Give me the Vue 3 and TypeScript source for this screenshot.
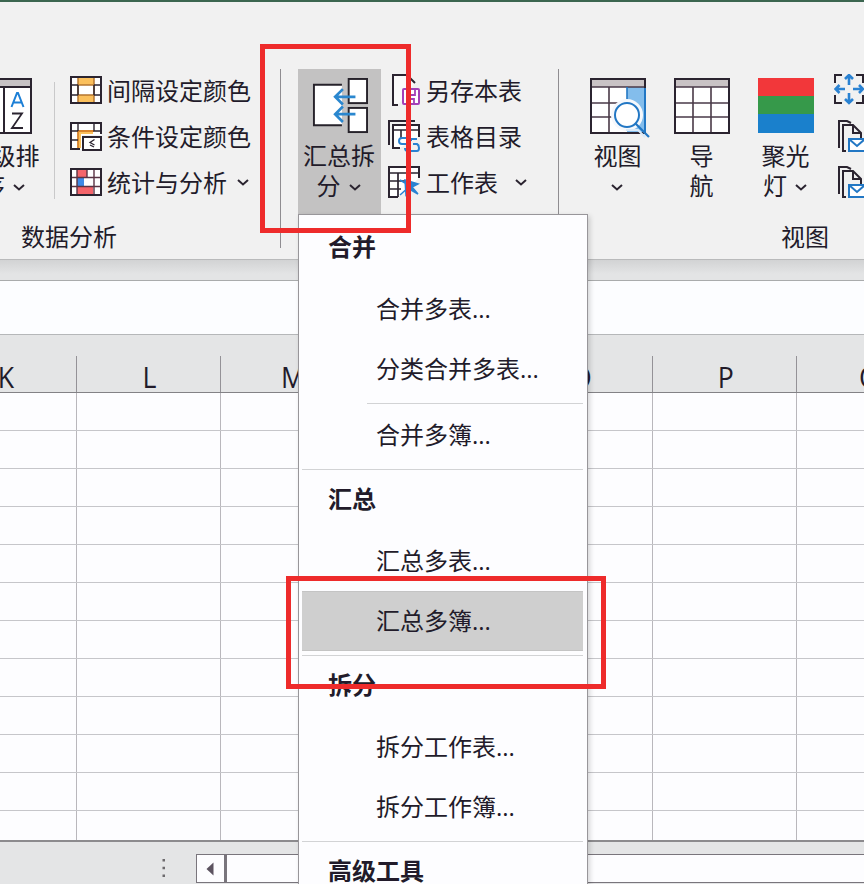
<script setup lang="ts">
interface MenuSection {
  title: string
  items: { label: string; active?: boolean; ruled?: boolean }[]
}

const sections: MenuSection[] = [
  {
    title: '合并',
    items: [
      { label: '合并多表...' },
      { label: '分类合并多表...' },
      { label: '合并多簿...', ruled: true },
    ],
  },
  {
    title: '汇总',
    items: [{ label: '汇总多表...' }, { label: '汇总多簿...', active: true }],
  },
  {
    title: '拆分',
    items: [{ label: '拆分工作表...' }, { label: '拆分工作簿...' }],
  },
  { title: '高级工具', items: [] },
]

const columns: string[] = ['K', 'L', 'M', 'N', 'O', 'P', 'Q']
const rowCount = 12
</script>

<template>
  <div class="window">
    <header class="ribbon">
      <section class="group group-data">
        <div class="tools">
          <div class="big sort">
            <svg class="big-icon" width="56" height="56" viewBox="0 0 56 56">
              <rect x="1" y="1" width="54" height="54" fill="#fff" stroke="#2b2430" stroke-width="2" />
              <rect x="2" y="2" width="52" height="6" fill="#c6c2c4" />
              <path d="M1 9H55M28 9V55" stroke="#2b2430" stroke-width="2" />
              <path d="M35.500 29L41 15h1L47.500 29M37.500 24.500H45.500" fill="none" stroke="#1c7fd6" stroke-width="2" />
              <path d="M36 35.500H46L36 50H47" fill="none" stroke="#2b2430" stroke-width="1.800" />
            </svg>
            <div class="cap">超级排</div>
            <div class="cap">序<svg class="chev" width="12" height="7" viewBox="0 0 12 7"><path d="M1 1L6 5.500L11 1" /></svg></div>
          </div>
          <div class="small-list data-list">
            <div class="small">
              <svg width="32" height="28" viewBox="0 0 32 28">
                <rect x="1" y="1" width="30" height="26" fill="#fff" />
                <path d="M8 1H24V9H8ZM8 19H24V27H8Z" fill="#fbc05c" />
                <path d="M8 9H24M8 19H24M8 1V27M24 1V27" stroke="#b5762f" stroke-width="1.500" />
                <path d="M1 9H8M24 9H31M1 19H8M24 19H31M8 9V19M24 9V19" stroke="#2b2430" stroke-width="1.500" />
                <rect x="1" y="1" width="30" height="26" fill="none" stroke="#2b2430" stroke-width="2" />
              </svg>
              <span>间隔设定颜色</span>
            </div>
            <div class="small">
              <svg width="32" height="30" viewBox="0 0 32 30">
                <path d="M1 2H31V14H12V28H1Z" fill="#fff" />
                <path d="M8 10H23V13H11V27H8Z" fill="#fbc05c" />
                <path d="M8 28V10H24" fill="none" stroke="#d8832b" stroke-width="1.800" />
                <path d="M1 10H8M1 19H8M8 2V10M24 2V10H31" fill="none" stroke="#2b2430" stroke-width="1.400" />
                <path d="M10 28H1V2H31V13" fill="none" stroke="#2b2430" stroke-width="2" />
                <rect x="13" y="16" width="18" height="13" fill="#fff" stroke="#2b2430" stroke-width="2" />
                <path d="M24.500 18.500L20 21.500L24.500 24M20 24L24 26" fill="none" stroke="#2b2430" stroke-width="1.300" />
              </svg>
              <span>条件设定颜色</span>
            </div>
            <div class="small">
              <svg width="32" height="28" viewBox="0 0 32 28">
                <rect x="1" y="1" width="30" height="26" fill="#fff" />
                <path d="M7 1H17V9H7ZM7 19H23V27H7Z" fill="#f4656b" />
                <rect x="7" y="10" width="7" height="8" fill="#3d8ae8" />
                <path d="M1 9.500H31M1 18.500H31M7 1V27M17 1V9M24 1V27" stroke="#5a3444" stroke-width="1.400" />
                <rect x="1" y="1" width="30" height="26" fill="none" stroke="#2b2430" stroke-width="2" />
              </svg>
              <span>统计与分析</span>
              <svg class="chev wide" width="12" height="7" viewBox="0 0 12 7"><path d="M1 1L6 5.500L11 1" /></svg>
            </div>
          </div>
        </div>
        <div class="label">数据分析</div>
      </section>

      <section class="group group-merge">
        <div class="tools">
          <div class="big pressed">
            <svg class="big-icon" width="58" height="58" viewBox="0 0 58 58">
              <path d="M31 7H2V49H31" fill="#fff" stroke="#26222a" stroke-width="2" />
              <rect x="38" y="1" width="19" height="25" fill="#fff" stroke="#26222a" stroke-width="2" />
              <rect x="38" y="31" width="19" height="25" fill="#fff" stroke="#26222a" stroke-width="2" />
              <path d="M45 19.500H24M32 11.500L24 19.500L32 27.500M45 37.500H24M32 29.500L24 37.500L32 45.500" fill="none" stroke="#2a87cf" stroke-width="2.800" />
            </svg>
            <div class="cap">汇总拆</div>
            <div class="cap">分<svg class="chev" width="12" height="7" viewBox="0 0 12 7"><path d="M1 1L6 5.500L11 1" /></svg></div>
          </div>
          <div class="small-list merge-list">
            <div class="small">
              <svg width="32" height="32" viewBox="0 0 32 32">
                <path d="M10 31H5V1H19L27 9" fill="#fafafa" stroke="#2b2430" stroke-width="2" />
                <rect x="15" y="15" width="16" height="15" rx="1" fill="#fff" stroke="#a341b8" stroke-width="2" />
                <path d="M19 15V21H27V15M20 30V25H26V30" fill="none" stroke="#a341b8" stroke-width="1.800" />
              </svg>
              <span>另存本表</span>
            </div>
            <div class="small">
              <svg width="32" height="32" viewBox="0 0 32 32">
                <path d="M1 25V1H27" fill="none" stroke="#2b2430" stroke-width="2" />
                <path d="M12 28H5V5H31V17" fill="#fff" stroke="#2b2430" stroke-width="2" />
                <path d="M5 10H31M13 10V18M22 10V16" stroke="#2b2430" stroke-width="1.600" />
                <path d="M19 18H14Q11 18 11 21T14 24H18M23 19H29M17 28Q17 31 20 31H29Q31 31 31 28T29 24H25M20 24Q20 20 24 20" fill="none" stroke="#2a82d2" stroke-width="2" />
              </svg>
              <span>表格目录</span>
            </div>
            <div class="small">
              <svg width="32" height="32" viewBox="0 0 32 32">
                <path d="M10 31H1V1H31V12" fill="#fff" stroke="#2b2430" stroke-width="2" />
                <path d="M1 7H31M1 15H20M1 23H13M10 7V31M20 7V15" fill="none" stroke="#2b2430" stroke-width="1.700" />
                <path d="M12 29L22 20M12 14L22 20M17 14L30 18L24 21L30 28L23 24L18 29Z" fill="#2a82d2" stroke="#2a82d2" stroke-width="1.500" />
              </svg>
              <span>工作表</span>
              <svg class="chev far" width="12" height="7" viewBox="0 0 12 7"><path d="M1 1L6 5.500L11 1" /></svg>
            </div>
          </div>
        </div>
      </section>

      <section class="group group-view">
        <div class="tools">
          <div class="big">
            <svg class="big-icon shifted" width="60" height="60" viewBox="0 0 60 60">
              <rect x="1" y="1" width="54" height="54" fill="#fff" />
              <rect x="1" y="1" width="54" height="8" fill="#c9c3c5" />
              <rect x="37" y="9" width="18" height="46" fill="#83bdec" />
              <path d="M1 9H55M1 25H37M1 39H30M19 9V55" stroke="#4a3a48" stroke-width="1.600" />
              <path d="M37 9V25" stroke="#2277c4" stroke-width="1.600" />
              <rect x="1" y="1" width="54" height="54" fill="none" stroke="#2b2430" stroke-width="2" />
              <path d="M55 10V54" stroke="#2277c4" stroke-width="2" />
              <circle cx="37" cy="37" r="16" fill="#f5f8fc" />
              <path d="M36 52H48L55 59" fill="none" stroke="#d9eafa" stroke-width="2" />
              <circle cx="37" cy="37" r="12" fill="#fff" stroke="#2277c4" stroke-width="2" />
              <path d="M45.500 45.500L59 59" stroke="#2277c4" stroke-width="2.200" />
            </svg>
            <div class="cap">视图</div>
            <div class="cap"><svg class="chev alone" width="12" height="7" viewBox="0 0 12 7"><path d="M1 1L6 5.500L11 1" /></svg></div>
          </div>
          <div class="big">
            <svg class="big-icon" width="56" height="56" viewBox="0 0 56 56">
              <rect x="1" y="1" width="54" height="54" fill="#fff" />
              <rect x="1" y="1" width="54" height="8" fill="#c9c3c5" />
              <path d="M1 9H55M1 25H55M1 39H55M19 9V55M37 9V55" stroke="#4a3a48" stroke-width="1.600" />
              <rect x="1" y="1" width="54" height="54" fill="none" stroke="#2b2430" stroke-width="2" />
            </svg>
            <div class="cap">导</div>
            <div class="cap">航</div>
          </div>
          <div class="big">
            <svg class="big-icon" width="56" height="56" viewBox="0 0 56 56">
              <rect width="56" height="18" fill="#f2373a" />
              <rect y="18" width="56" height="18" fill="#36994a" />
              <rect y="36" width="56" height="19" fill="#1a80cc" />
            </svg>
            <div class="cap">聚光</div>
            <div class="cap">灯<svg class="chev" width="12" height="7" viewBox="0 0 12 7"><path d="M1 1L6 5.500L11 1" /></svg></div>
          </div>
          <div class="small-list view-list">
            <div class="small">
              <svg width="32" height="32" viewBox="0 0 32 32">
                <path d="M1 9V1H8M22 1H29V9M1 21V29H8M22 29H29V21" fill="none" stroke="#2b2430" stroke-width="2" />
                <path d="M15 11V1M11 5L15 1L19 5M15 19V29M11 25L15 29L19 25M11 15H1.500M5.500 11L1.500 15L5.500 19M19 15H29M25 11L29 15L25 19" fill="none" stroke="#2a82d2" stroke-width="2.600" />
              </svg>
            </div>
            <div v-for="n in 2" :key="n" class="small">
              <svg width="36" height="32" viewBox="0 0 36 32">
                <path d="M5 28V1H13L17 3M12 31H9V5H19L27 13V18" fill="none" stroke="#2b2430" stroke-width="2" />
                <path d="M19 5V13H27" fill="none" stroke="#2b2430" stroke-width="2" />
                <rect x="15" y="19" width="20" height="12" fill="#fff" stroke="#2277c4" stroke-width="2" />
                <path d="M15 19L23 26L31 19" fill="none" stroke="#2277c4" stroke-width="2" />
              </svg>
            </div>
          </div>
        </div>
        <div class="label">视图</div>
      </section>
    </header>

    <div class="strip"></div>
    <div class="formula"></div>

    <main class="sheet">
      <div class="col-heads">
        <div v-for="c in columns" :key="c" class="col-head"><span>{{ c }}</span></div>
      </div>
      <div class="grid">
        <div v-for="r in rowCount" :key="r" class="row">
          <div v-for="c in columns" :key="c" class="cell"></div>
        </div>
      </div>
    </main>

    <footer class="bottom">
      <svg class="dots" width="4" height="20" viewBox="0 0 4 20">
        <path d="M.5 1h2.500v2.500H.5zM.5 8.700h2.500v2.500H.5zM.5 16.500h2.500v2.500H.5z" fill="#6c6a6d" />
      </svg>
      <div class="arrow">
        <svg width="8" height="14" viewBox="0 0 8 14"><path d="M7.500 .5V13.500L.5 7Z" fill="#5c5360" /></svg>
      </div>
      <div class="track"></div>
    </footer>

    <nav class="menu">
      <template v-for="(s, i) in sections" :key="s.title">
        <div v-if="i > 0" class="rule"></div>
        <div class="menu-title">{{ s.title }}</div>
        <template v-for="it in s.items" :key="it.label">
          <div v-if="it.ruled" class="rule inset"></div>
          <div class="menu-item" :class="{ active: it.active }">{{ it.label }}</div>
        </template>
      </template>
    </nav>

    <div class="mark mark-button"></div>
    <div class="mark mark-item"></div>
  </div>
</template>

<style>
body {
  margin: 0;
  overflow: hidden;
}
</style>

<style scoped>
.window {
  position: relative;
  width: 864px;
  height: 884px;
  overflow: hidden;
  display: flex;
  flex-direction: column;
  background: #e4e5e6;
  color: #221b2a;
  font-family: 'Open Sans', 'Noto Sans CJK SC', sans-serif;
  font-size: 24px;
}
.window * {
  box-sizing: border-box;
}
svg {
  display: block;
  flex: none;
}
.ribbon {
  flex: none;
  height: 260px;
  display: flex;
  padding-top: 67px;
  border-top: 2px solid #3c6650;
  border-bottom: 1px solid #b9babb;
  background: #f1f1f1;
}
.group {
  flex: none;
  height: 179px;
  display: flex;
  flex-direction: column;
}
.group-data {
  width: 281px;
  border-right: 1px solid #8f8d91;
}
.group-merge {
  width: 278px;
  padding-left: 17px;
  border-right: 1px solid #8f8d91;
}
.group-view {
  padding-left: 17px;
}
.tools {
  display: flex;
  height: 145px;
}
.big {
  flex: none;
  width: 84px;
  height: 145px;
  padding-top: 9px;
  display: flex;
  flex-direction: column;
  align-items: center;
}
.big-icon {
  height: 56px;
  overflow: visible;
  margin-bottom: 7px;
}
.shifted {
  height: 60px;
  margin: 0 -4px 3px 0;
}
.sort {
  width: 88px;
  margin-left: -40px;
}
.pressed {
  width: 83px;
  background: #c3c2c2;
}
.cap {
  display: flex;
  align-items: center;
  height: 30px;
  margin-right: 1px;
  line-height: 30px;
  white-space: nowrap;
}
.chev {
  margin: 2px 1px 0 8px;
}
.chev path {
  fill: none;
  stroke: #2b2430;
  stroke-width: 2;
}
.chev.alone {
  margin: 2px 1px 0 0;
}
.small-list {
  display: flex;
  flex-direction: column;
  padding-left: 7px;
}
.merge-list,
.view-list {
  margin-top: -2px;
}
.data-list {
  margin: 13px 0 15px 6px;
  padding-left: 15px;
  border-left: 1px solid #c9c9ca;
}
.data-list .small:first-child {
  margin-top: -15px;
}
.view-list {
  padding-left: 6px;
}
.small {
  flex: none;
  display: flex;
  align-items: center;
  height: 46px;
  gap: 6px;
  white-space: nowrap;
}
.data-list .small {
  gap: 5px;
}
.small span {
  padding-top: 2px;
  line-height: 30px;
}
.small .chev {
  margin: 1px 0 0 11px;
}
.small .wide {
  margin-left: 5px;
}
.label {
  height: 34px;
  margin-top: 6px;
  line-height: 34px;
}
.group-data .label {
  padding-left: 21px;
}
.group-view .label {
  padding-left: 205px;
}
.strip {
  flex: none;
  height: 21px;
  background: linear-gradient(#d2d3d4, #e3e4e5 70%);
  border-bottom: 1px solid #a9abac;
}
.formula {
  flex: none;
  height: 54px;
  background: #fcfdff;
  border-bottom: 1px solid #b5b7b9;
}
.sheet {
  flex: none;
  height: 507px;
  display: flex;
  flex-direction: column;
  overflow: hidden;
  background: #fdfdff;
  border-bottom: 2px solid #8c8b8e;
}
.col-heads {
  flex: none;
  display: flex;
  height: 58px;
  margin-left: -67px;
  padding-top: 21px;
  background: #e4e5e6;
  border-bottom: 1px solid #838286;
}
.col-head,
.cell {
  flex: none;
  width: 144px;
  border-right: 1px solid #b9b7bc;
}
.col-head {
  display: flex;
  justify-content: center;
  padding-left: 2px;
  font-size: 29px;
  line-height: 41px;
  border-right-color: #949297;
}
.col-head span {
  transform: scaleX(0.92);
}
.grid {
  margin-left: -67px;
}
.row {
  display: flex;
  height: 38px;
  border-bottom: 1px solid #c6c6ca;
}
.bottom {
  flex: 1;
  display: flex;
  align-items: flex-start;
  padding-top: 12px;
  background: #e4e5e6;
}
.dots {
  margin: 4px 30px 0 162px;
}
.arrow {
  width: 29px;
  height: 29px;
  padding-right: 2px;
  display: flex;
  align-items: center;
  justify-content: center;
  background: #fdfdff;
  border: 1px solid #79757c;
}
.track {
  flex: 1;
  height: 29px;
  background: #fdfdff;
  border: 1px solid #79757c;
  border-left-width: 2px;
  border-right: 0;
}
.menu {
  position: absolute;
  left: 298px;
  top: 214px;
  width: 290px;
  height: 680px;
  padding: 3px 4px 0 3px;
  background: #fdfdff;
  border: 1px solid #98969a;
  box-shadow: 2px 2px 5px rgba(0, 0, 0, 0.16);
}
.menu-title {
  height: 61px;
  padding-left: 26px;
  line-height: 58px;
  font-weight: 700;
}
.menu-item {
  height: 60px;
  padding-left: 74px;
  line-height: 60px;
}
.menu-item.active {
  background: #cfcfcf;
  border-top: 1px solid #c4c4c4;
  border-bottom: 1px solid #c4c4c4;
  line-height: 58px;
}
.rule {
  height: 5px;
  border-bottom: 1px solid #d2d3d5;
}
.rule.inset {
  margin: 0 0 1px 65px;
}
.mark {
  position: absolute;
  border: 5px solid #ee2b2b;
}
.mark-button {
  left: 260px;
  top: 44px;
  width: 151px;
  height: 189px;
}
.mark-item {
  left: 286px;
  top: 576px;
  width: 320px;
  height: 113px;
}
</style>
